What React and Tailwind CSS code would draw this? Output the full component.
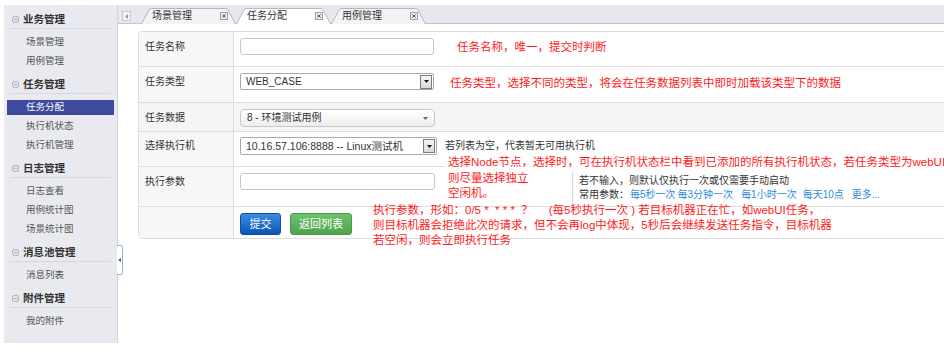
import React from "react";

const font = "font-['Liberation_Sans','Noto_Sans_CJK_SC',sans-serif]";

const groups = [
  { title: "业务管理", items: ["场景管理", "用例管理"] },
  { title: "任务管理", items: ["任务分配", "执行机状态", "执行机管理"] },
  { title: "日志管理", items: ["日志查看", "用例统计图", "场景统计图"] },
  { title: "消息池管理", items: ["消息列表"] },
  { title: "附件管理", items: ["我的附件"] },
];

function GroupIcon() {
  return (
    <svg width="7" height="7" viewBox="0 0 7 7">
      <rect x="0.5" y="0.5" width="6" height="6" rx="1.5" fill="#e2e4ea" stroke="#b1b5c1" />
      <path d="M2 4.3 L3.5 2.8 L5 4.3" fill="none" stroke="#8a8f9c" strokeWidth="0.8" />
    </svg>
  );
}

function Sidebar() {
  return (
    <div className="w-[118px] shrink-0 pt-[5px] pl-[4px]">
      <div className="w-[114px] h-[338px] bg-[#e9eaef] border-r border-[#d2d4dc] pt-[5px]">
        {groups.map((g) => (
          <div key={g.title}>
            <div className="mx-[6px] h-[19px] pl-[2px] flex items-center gap-[4px] border-b border-[#d6d8df]">
              <GroupIcon />
              <span className="text-[10.5px] font-bold text-[#333] leading-[19px]">{g.title}</span>
            </div>
            <div className="py-[4px]">
              {g.items.map((it) => (
                <div key={it} className="h-[19px] px-[3px] flex items-center">
                  <div
                    className={
                      it === "任务分配"
                        ? "h-[15px] w-full pl-[19px] flex items-center text-[9.5px] bg-[#3e4a9e] text-white"
                        : "h-[15px] w-full pl-[19px] flex items-center text-[9.5px] text-[#555]"
                    }
                  >
                    {it}
                  </div>
                </div>
              ))}
            </div>
          </div>
        ))}
      </div>
    </div>
  );
}

function CloseIcon() {
  return (
    <svg width="8" height="8" viewBox="0 0 8 8">
      <rect x="0.5" y="0.5" width="7" height="7" fill="#efefef" stroke="#a0a0a0" />
      <path d="M2.3 2.3 L5.7 5.7 M5.7 2.3 L2.3 5.7" stroke="#555" strokeWidth="1" />
    </svg>
  );
}

function Tab({ label, active }) {
  return (
    <div className="relative w-[95px] h-[16px]">
      <svg className="absolute inset-0" width="95" height="16" viewBox="0 0 95 16">
        <path
          d="M0.5 16 L8 1.8 Q8.8 0.5 10.5 0.5 L84.5 0.5 Q86.2 0.5 87 1.8 L94.5 16"
          fill={active ? "#ffffff" : "#f2f3f6"}
          stroke="#b3b7c3"
        />
      </svg>
      {active && <div className="absolute left-[1px] right-[1px] bottom-[-1px] h-[1px] bg-white" />}
      <div className="relative h-full flex items-center justify-between pl-[11px] pr-[8px]">
        <span className="text-[10px] leading-[16px] text-[#333]">{label}</span>
        <CloseIcon />
      </div>
    </div>
  );
}

function TabBar() {
  return (
    <div className="h-[19px] bg-[#e7e8ee] border-b border-[#c3c6d0] flex items-end">
      <div className="ml-[4px] mb-[2px] w-[9px] h-[10px] border border-[#c6c8d0] bg-[#f3f4f7] flex items-center justify-center">
        <svg width="3" height="5" viewBox="0 0 3 5">
          <path d="M3 0 L0 2.5 L3 5 Z" fill="#9a9ea8" />
        </svg>
      </div>
      <div className="ml-[10px] flex items-end mb-[-1px]">
        <Tab label="场景管理" />
        <Tab label="任务分配" active />
        <Tab label="用例管理" />
      </div>
    </div>
  );
}

function DropBtn() {
  return (
    <div className="w-[12px] h-[14px] border border-[#7b7b7b] bg-linear-to-b from-[#f7f7f7] to-[#d8d8d8] flex items-center justify-center">
      <svg width="5" height="3" viewBox="0 0 5 3">
        <path d="M0 0 H5 L2.5 3 Z" fill="#111" />
      </svg>
    </div>
  );
}

function Row({ h, gray, label, pt, last, children }) {
  return (
    <div className={`flex ${h} ${last ? "" : "border-b border-[#dddddd]"} ${gray ? "bg-[#f5f5f5]" : ""}`}>
      <div
        className={`w-[95px] shrink-0 border-r border-[#dddddd] pl-[6px] ${pt} text-[10px] leading-[17px] text-[#333] ${
          gray ? "" : "bg-[#f7f7f7]"
        }`}
      >
        {label}
      </div>
      <div className={`flex-1 flex items-start pl-[6px] ${pt}`}>{children}</div>
    </div>
  );
}

function FormTable() {
  return (
    <div className="w-[830px] border border-[#dddddd] rounded-[4px] overflow-hidden">
      <Row h="h-[35px]" pt="pt-[6px]" label="任务名称">
        <input readOnly className="w-[194px] h-[17px] border border-[#c8c8c8] rounded-[3px] bg-white outline-none" />
      </Row>
      <Row h="h-[36px]" pt="pt-[6px]" label="任务类型">
        <div className="w-[194px] h-[17px] border border-[#a8a8a8] rounded-[2px] bg-white flex items-center justify-between pl-[5px] pr-[1px]">
          <span className="text-[10px] text-[#333] leading-[15px]">WEB_CASE</span>
          <DropBtn />
        </div>
      </Row>
      <Row h="h-[29px]" pt="pt-[6px]" label="任务数据" gray>
        <div className="w-[195px] h-[18px] border border-[#c6c6c6] rounded-[4px] bg-linear-to-b from-white to-[#ededed] flex items-center justify-between pl-[6px] pr-[6px]">
          <span className="text-[10px] text-[#333] leading-[16px]">8 - 环境测试用例</span>
          <svg width="5" height="3" viewBox="0 0 5 3">
            <path d="M0 0 H5 L2.5 3 Z" fill="#666" />
          </svg>
        </div>
      </Row>
      <Row h="h-[35px]" pt="pt-[5px]" label="选择执行机">
        <div className="w-[197px] h-[18px] border border-[#a8a8a8] rounded-[2px] bg-white flex items-center justify-between pl-[5px] pr-[1px]">
          <span className="text-[10.5px] text-[#333] leading-[16px] whitespace-nowrap">10.16.57.106:8888 -- Linux测试机</span>
          <DropBtn />
        </div>
        <span className="ml-[8px] text-[10px] leading-[18px] text-[#333] whitespace-nowrap">若列表为空，代表暂无可用执行机</span>
      </Row>
      <Row h="h-[40px]" pt="pt-[6px]" label="执行参数">
        <input readOnly className="w-[195px] h-[17px] border border-[#c8c8c8] rounded-[3px] bg-white outline-none" />
        <div className="ml-[137px] -mt-[3px] h-[36px] border-l border-[#d8d8d8] bg-white pl-[6px] pt-[4px] text-[10px] leading-[14px] text-[#333] whitespace-nowrap">
          <div>若不输入，则默认仅执行一次或仅需要手动启动</div>
          <div className="flex">
            <span>常用参数：</span>
            <span className="ml-[1px] text-[#2f8ad6]">每5秒一次</span>
            <span className="ml-[2px] text-[#2f8ad6]">每3分钟一次</span>
            <span className="ml-[8px] text-[#2f8ad6]">每1小时一次</span>
            <span className="ml-[6px] text-[#2f8ad6]">每天10点</span>
            <span className="ml-[8px] text-[#2f8ad6]">更多...</span>
          </div>
        </div>
      </Row>
      <Row h="h-[31px]" pt="pt-[6px]" label="" last>
        <button className="w-[41px] h-[22px] rounded-[3px] border border-[#0d4fa8] bg-linear-to-b from-[#3a8be0] to-[#0b55b6] text-white text-[11px] leading-[20px]">
          提交
        </button>
        <button className="ml-[9px] w-[62px] h-[22px] rounded-[3px] border border-[#4a9a4a] bg-linear-to-b from-[#6cc36c] to-[#4ea44e] text-white text-[11px] leading-[20px]">
          返回列表
        </button>
      </Row>
    </div>
  );
}

function Annotations() {
  const red = "absolute text-[11.5px] text-[#ff1a1a] whitespace-pre";
  return (
    <>
      <div className={`${red} left-[457px] top-[39px] leading-[16px]`}>任务名称，唯一，提交时判断</div>
      <div className={`${red} left-[450px] top-[75px] leading-[16px]`}>
        任务类型，选择不同的类型，将会在任务数据列表中即时加载该类型下的数据
      </div>
      <div className={`${red} left-[445px] right-0 top-[155px] leading-[15.5px]`}>
        <div className="bg-white pl-[3px]">选择Node节点，选择时，可在执行机状态栏中看到已添加的所有执行机状态，若任务类型为webUI</div>
        <div className="pl-[3px]">则尽量选择独立</div>
        <div className="pl-[3px]">空闲机。</div>
      </div>
      <div className={`${red} left-[373px] top-[203px] leading-[15px]`}>
        <div>执行参数，形如：0/5 *  * * *  ？     (每5秒执行一次 ) 若目标机器正在忙，如webUI任务，</div>
        <div>则目标机器会拒绝此次的请求，但不会再log中体现，5秒后会继续发送任务指令，目标机器</div>
        <div>若空闲，则会立即执行任务</div>
      </div>
    </>
  );
}

export default function App() {
  return (
    <div className={`relative w-[944px] h-[355px] overflow-hidden bg-white flex ${font}`}>
      <Sidebar />
      <main className="flex-1 min-w-0 pt-[5px] overflow-hidden">
        <TabBar />
        <div className="pl-[20px] pt-[7px]">
          <FormTable />
        </div>
      </main>
      <div className="absolute left-[117px] top-[245px] w-[6px] h-[30px] border border-l-0 border-[#8fb0e2] bg-white rounded-r-[2px] flex items-center justify-center">
        <svg width="3" height="4" viewBox="0 0 3 4">
          <path d="M3 0 L0 2 L3 4 Z" fill="#4a5a7a" />
        </svg>
      </div>
      <Annotations />
    </div>
  );
}
